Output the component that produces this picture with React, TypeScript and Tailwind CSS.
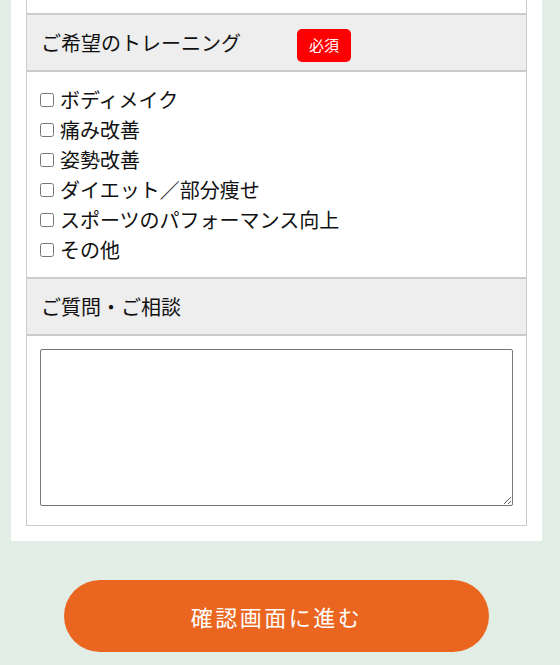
import React, { useState } from 'react';

const TRAININGS = [
  'ボディメイク',
  '痛み改善',
  '姿勢改善',
  'ダイエット／部分痩せ',
  'スポーツのパフォーマンス向上',
  'その他',
];

export default function App() {
  const [checked, setChecked] = useState<string[]>([]);
  const [message, setMessage] = useState('');

  const toggle = (item: string) => {
    setChecked(prev => (prev.includes(item) ? prev.filter(i => i !== item) : [...prev, item]));
  };

  return (
    <div
      className="min-h-[665px] bg-[#e2ede5] text-[#111]"
      style={{ fontFamily: '"Noto Sans CJK JP", "Noto Sans", sans-serif' }}
    >
      {/* Form card */}
      <div className="mx-[11px] w-[531px] bg-white px-[15px] pb-[15px]">
        <div className="border-x border-b border-[#cccccc]">
          {/* previous row tail */}
          <div className="h-[13px]" />

          {/* Training */}
          <div className="flex h-[59px] items-center border-y-2 border-[#cccccc] bg-[#eeeeee] pl-[14px]">
            <span className="w-[256px] text-[20px] leading-[28px]">ご希望のトレーニング</span>
            <span className="mt-[5px] flex h-[33px] w-[54px] items-center justify-center rounded-[5px] bg-[#ff0000] text-[15px] text-white">
              必須
            </span>
          </div>
          <div className="px-[13px] pt-[13px] pb-[12px]">
            {TRAININGS.map(item => (
              <label key={item} className="flex h-[30px] items-center gap-[6px] text-[20px]">
                <input
                  type="checkbox"
                  className="h-[14px] w-[14px]"
                  checked={checked.includes(item)}
                  onChange={() => toggle(item)}
                />
                <span>{item}</span>
              </label>
            ))}
          </div>

          {/* Question */}
          <div className="flex h-[59px] items-center border-y-2 border-[#cccccc] bg-[#eeeeee] pl-[14px]">
            <span className="text-[20px] leading-[28px]">ご質問・ご相談</span>
          </div>
          <div className="px-[13px] pt-[13px] pb-[19px]">
            <textarea
              value={message}
              onChange={e => setMessage(e.target.value)}
              className="block h-[157px] w-full rounded-[2px] border border-[#767676] bg-white"
            />
          </div>
        </div>
      </div>

      {/* Submit */}
      <div className="flex justify-center pt-[39px] pr-[7px]">
        <button className="flex h-[72px] w-[425px] items-center justify-center rounded-full bg-[#ea6620] text-[22px] tracking-[2.5px] text-white">
          確認画面に進む
        </button>
      </div>
    </div>
  );
}
